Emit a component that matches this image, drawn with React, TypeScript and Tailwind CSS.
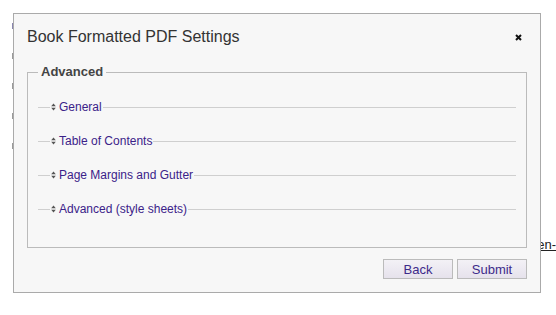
import { ReactNode } from 'react';

const sections = ['General', 'Table of Contents', 'Page Margins and Gutter', 'Advanced (style sheets)'];

const SortIcon = () => (
  <svg width="5" height="8" viewBox="0 0 5 8" className="shrink-0">
    <path d="M2.5 0.5 L4.8 3.3 L0.2 3.3 Z" fill="#555" />
    <path d="M2.5 7.5 L4.8 4.7 L0.2 4.7 Z" fill="#555" />
  </svg>
);

const SectionRow = ({ children }: { children: ReactNode }) => (
  <div className="flex items-center h-[14px]">
    <div className="w-[12px] h-px bg-[#cfcfcf]" />
    <div className="ml-[1px] mr-[3px]">
      <SortIcon />
    </div>
    <span className="text-[12px] leading-[14px] text-[#3b2289] whitespace-nowrap">{children}</span>
    <div className="flex-1 h-px bg-[#cfcfcf] ml-[1px]" />
  </div>
);

export default function App() {
  return (
    <div className="relative w-[556px] h-[315px] bg-white overflow-hidden font-['Liberation_Sans',Arial,sans-serif]">
      {/* page behind the dialog */}
      <div className="flex justify-between h-full">
        <div className="flex flex-col gap-[24px] pt-[23px] pl-[12px]">
          <span className="w-px h-[6px] bg-[#8a86b0]" />
          <span className="w-px h-[6px] bg-[#9a9a9a]" />
          <span className="w-px h-[6px] bg-[#9a9a9a]" />
          <span className="w-px h-[6px] bg-[#9a9a9a]" />
          <span className="w-px h-[6px] bg-[#9a9a9a]" />
        </div>
        <a className="mt-[237px] text-[13px] leading-[15px] text-[#222] underline">en-</a>
      </div>

      {/* dialog */}
      <div className="absolute left-[13px] top-[13px] w-[528px] h-[280px] border border-[#aaa] bg-[#f7f7f7] flex flex-col px-[13px]">
        <div className="flex items-center justify-between pt-[13px]">
          <h1 className="text-[16px] leading-[20px] text-[#333]">Book Formatted PDF Settings</h1>
          <svg width="7" height="7" viewBox="0 0 7 7" className="mr-[5px]">
            <path d="M1 1 L6 6 M6 1 L1 6" stroke="#111" strokeWidth="2" />
          </svg>
        </div>

        <fieldset className="mt-[17px] h-[184px] border border-[#bbb] px-[10px]">
          <legend className="px-[3px] text-[13px] leading-[16px] font-bold text-[#444]">Advanced</legend>
          <div className="flex flex-col gap-[20px] pt-[20px]">
            {sections.map((s) => (
              <SectionRow key={s}>{s}</SectionRow>
            ))}
          </div>
        </fieldset>

        <div className="flex justify-end gap-[4px] mt-[11px]">
          <button className="w-[70px] h-[20px] border border-[#bbb] bg-gradient-to-b from-[#f3f1f6] to-[#e6e2ec] text-[13px] text-[#3d2a8a]">
            Back
          </button>
          <button className="w-[70px] h-[20px] border border-[#bbb] bg-gradient-to-b from-[#f3f1f6] to-[#e6e2ec] text-[13px] text-[#3d2a8a]">
            Submit
          </button>
        </div>
      </div>
    </div>
  );
}
